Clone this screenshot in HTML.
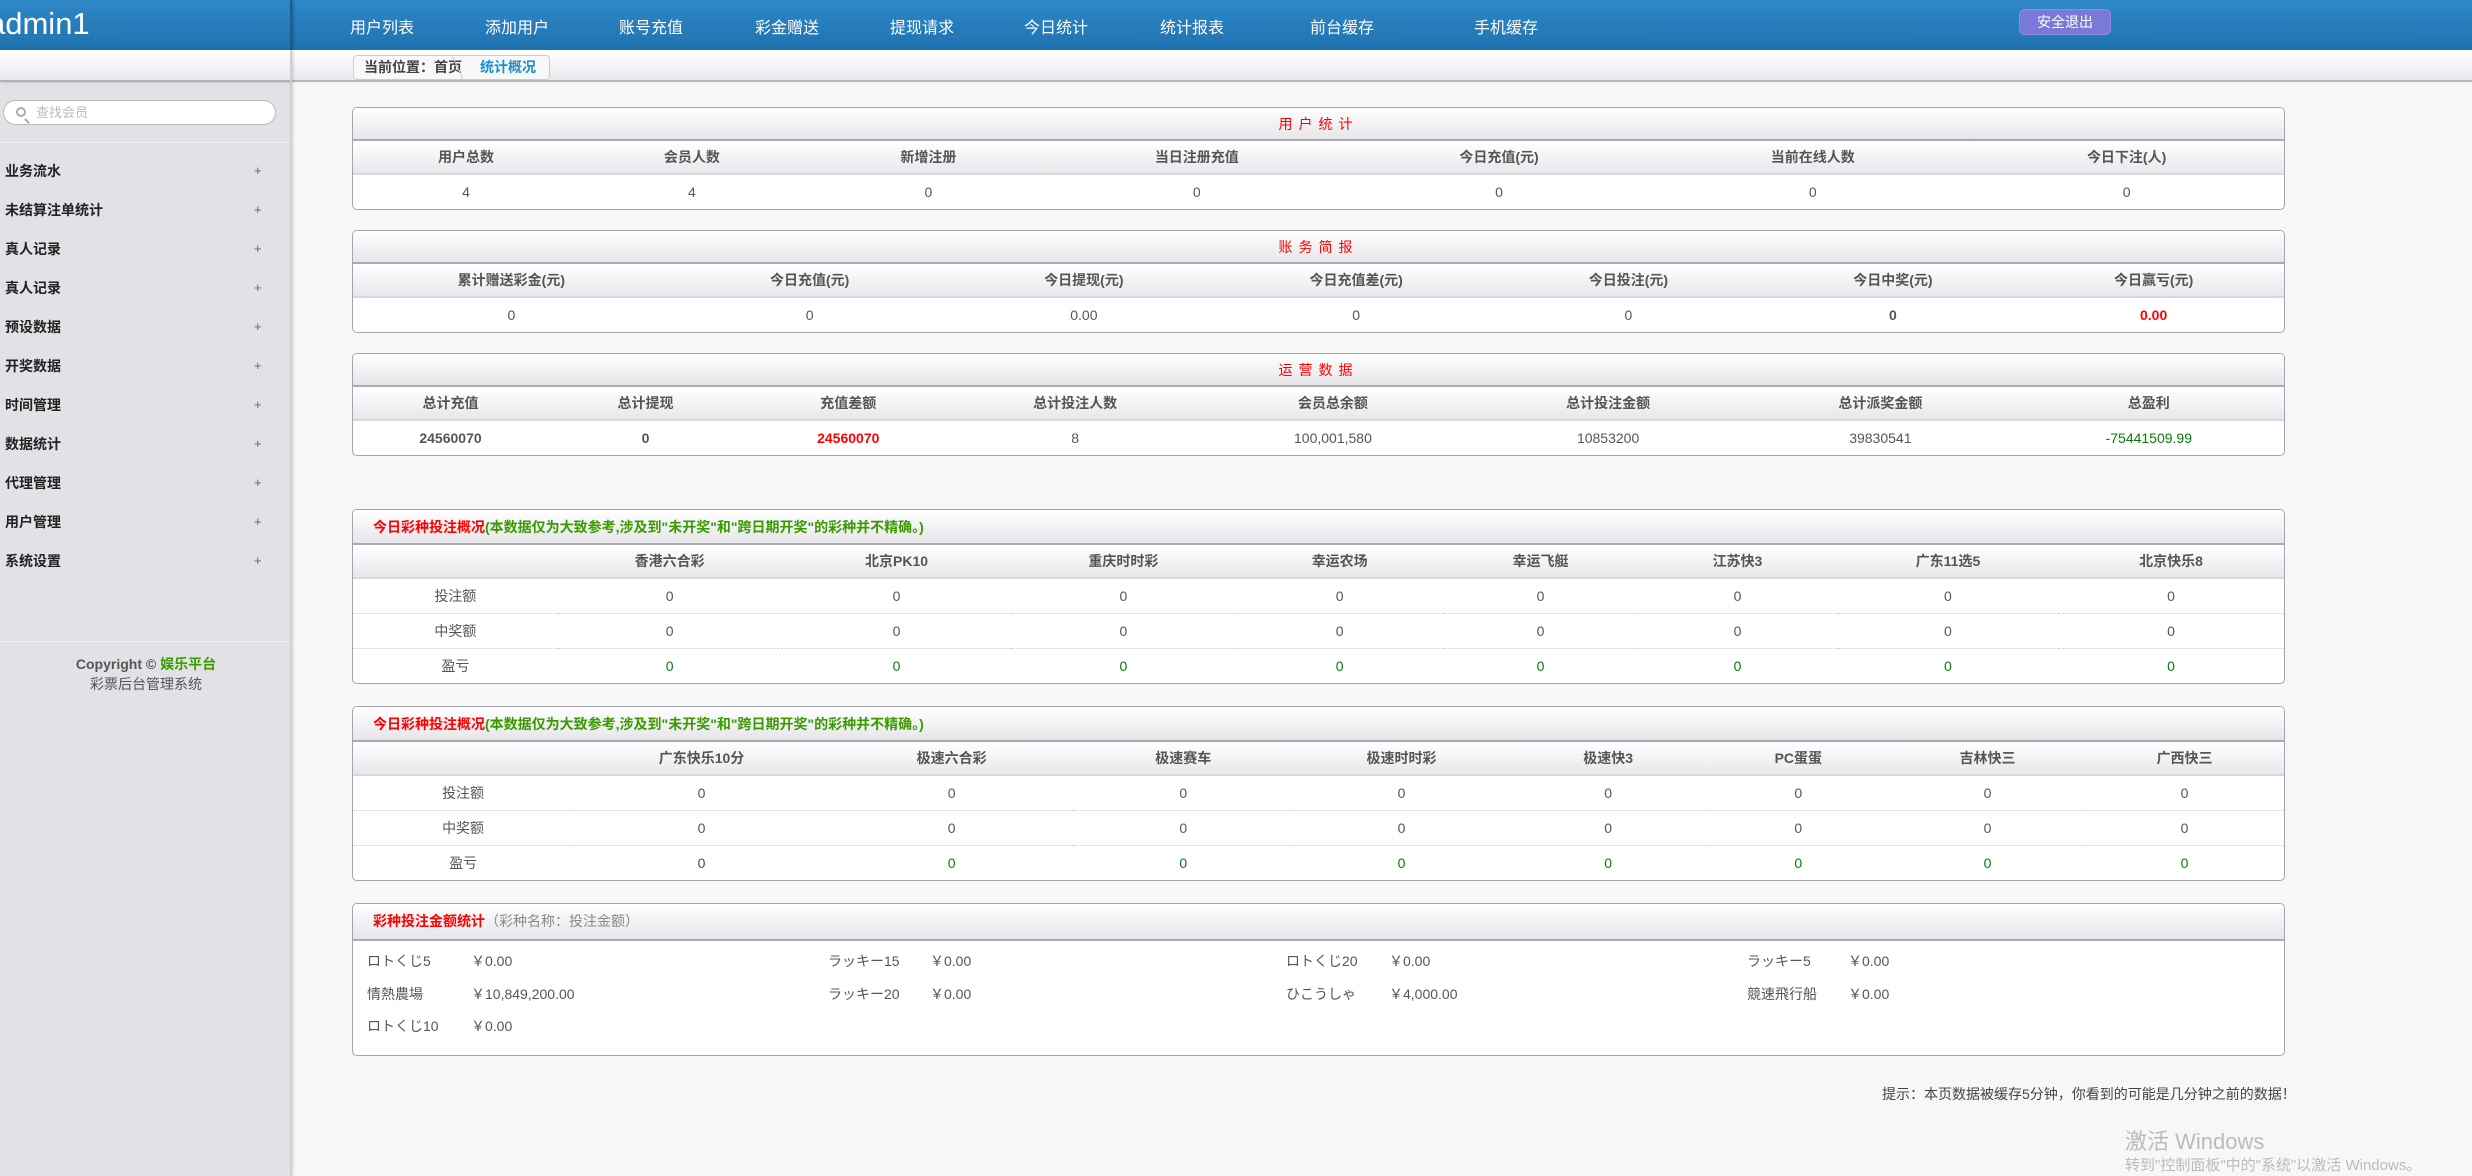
<!DOCTYPE html>
<html><head><meta charset="utf-8">
<style>
*{margin:0;padding:0;box-sizing:border-box}
body{width:2472px;height:1176px;overflow:hidden;background:#f7f7f7;font-family:"Liberation Sans","Noto Sans CJK SC",sans-serif;font-size:14px;color:#555;position:relative}
.hdr{position:absolute;left:0;top:0;width:2472px;height:50px;background:linear-gradient(#2f88c6,#1f72b0)}
.hdrl{position:absolute;left:0;top:0;width:292px;height:50px;border-right:2px solid #1b5f92;box-shadow:1px 0 3px rgba(0,0,0,.3)}
.logo{position:absolute;left:-12px;top:6px;color:#fff;font-size:31px}
.nav{position:absolute;top:14px;color:#fff;font-size:16px;transform:translateX(-50%);white-space:nowrap}
.exit{position:absolute;left:2019px;top:9px;width:92px;height:26px;border-radius:6px;background:#7a78d8;border:1px solid #8f8ce6;color:#fff;font-size:14px;text-align:center;line-height:24px}
.bar{position:absolute;left:0;top:50px;width:2472px;height:32px;background:linear-gradient(#fff,#e9e9ee);border-bottom:2px solid #b8b8c4}
.side{position:absolute;left:0;top:82px;width:292px;height:1094px;background:#e2e2e6;border-right:2px solid #cfcfd4;box-shadow:1px 0 3px rgba(0,0,0,.15)}
.sideh{position:absolute;left:0;top:50px;width:292px;height:32px;border-right:2px solid #cfcfd4;box-shadow:1px 0 3px rgba(0,0,0,.2)}
.crumb{position:absolute;left:353px;top:55px;width:197px;height:25px;border:1px solid #ccc;border-radius:4px;background:#f8f8f8;font-size:14px;line-height:23px;padding-left:10px;color:#444;font-weight:bold}
.crumb span{color:#1a8ed0;margin-left:18px}
.crumb i{position:absolute;left:103px;top:0;width:1px;height:23px;border-right:1px solid #ccc;transform:skewX(25deg)}
.search{position:absolute;left:3px;top:100px;width:273px;height:25px;border:1px solid #bbb;border-radius:13px;background:#fff;color:#bbb;font-size:13px;line-height:23px;padding-left:32px}
.search b{position:absolute;left:12px;top:6px;width:10px;height:10px;border:2px solid #aaa;border-radius:50%}
.search b:after{content:"";position:absolute;left:8px;top:9px;width:2px;height:6px;background:#aaa;transform:rotate(-45deg)}
.sep{position:absolute;left:0;width:290px;height:1px;background:#c8c8cc;border-bottom:1px solid #f0f0f2}
.si{position:absolute;left:5px;font-size:14px;color:#222;font-weight:bold}
.plus{position:absolute;left:254px;font-size:13px;color:#666}
.copy{position:absolute;left:0;width:292px;text-align:center;font-size:14px;color:#555;font-weight:bold}
.panel{position:absolute;left:352px;width:1933px;border:1px solid #a3a3b3;border-radius:5px;background:#fff;overflow:hidden}
.panel table{width:100%;border-collapse:collapse;table-layout:fixed}
.panel td{text-align:center;font-size:14px}
.tt{height:33px;background:linear-gradient(#fff,#e6e6ea);border-bottom:2px solid #a8a8b6;color:#f00;text-align:center;line-height:32px;font-size:14px;letter-spacing:6px}
.th td{height:33px;background:linear-gradient(#fff,#e8e8ec);border-bottom:2px solid #d6d8e0;font-weight:bold;color:#555}
.tr td{height:35px;border-bottom:1px dotted #ccc}
.tr:last-child td{border-bottom:none}
.tl{height:35px;background:linear-gradient(#fff,#e6e6ea);border-bottom:2px solid #a8a8b6;line-height:34px;padding-left:20px;font-size:14px;font-weight:bold;color:#f00}
.tl span{color:#3a9a00}
.g{color:#0a7a0a}.r{color:#f00;font-weight:bold}.b{font-weight:bold}
.it{position:absolute;font-size:14px;color:#555}
</style></head><body>
<div class="hdr"></div>
<div class="hdrl"></div>
<div class="logo">admin1</div>
<div class="nav" style="left:382px">用户列表</div>
<div class="nav" style="left:517px">添加用户</div>
<div class="nav" style="left:651px">账号充值</div>
<div class="nav" style="left:787px">彩金赠送</div>
<div class="nav" style="left:922px">提现请求</div>
<div class="nav" style="left:1056px">今日统计</div>
<div class="nav" style="left:1192px">统计报表</div>
<div class="nav" style="left:1342px">前台缓存</div>
<div class="nav" style="left:1506px">手机缓存</div>
<div class="exit">安全退出</div>
<div class="bar"></div>
<div class="side"></div>
<div class="sideh"></div>
<div class="crumb">当前位置：首页<i></i><span>统计概况</span></div>
<div class="search"><b></b>查找会员</div>
<div class="sep" style="top:142px"></div>
<div class="si" style="top:161px">业务流水</div><div class="plus" style="top:163px">+</div>
<div class="si" style="top:200px">未结算注单统计</div><div class="plus" style="top:202px">+</div>
<div class="si" style="top:239px">真人记录</div><div class="plus" style="top:241px">+</div>
<div class="si" style="top:278px">真人记录</div><div class="plus" style="top:280px">+</div>
<div class="si" style="top:317px">预设数据</div><div class="plus" style="top:319px">+</div>
<div class="si" style="top:356px">开奖数据</div><div class="plus" style="top:358px">+</div>
<div class="si" style="top:395px">时间管理</div><div class="plus" style="top:397px">+</div>
<div class="si" style="top:434px">数据统计</div><div class="plus" style="top:436px">+</div>
<div class="si" style="top:473px">代理管理</div><div class="plus" style="top:475px">+</div>
<div class="si" style="top:512px">用户管理</div><div class="plus" style="top:514px">+</div>
<div class="si" style="top:551px">系统设置</div><div class="plus" style="top:553px">+</div>
<div class="sep" style="top:641px"></div>
<div class="copy" style="top:654px">Copyright © <span style="color:#3a9a00">娱乐平台</span></div>
<div class="copy" style="top:674px;font-weight:normal">彩票后台管理系统</div>

<div class="panel" style="top:107px">
<div class="tt">用户统计</div>
<table><colgroup><col style="width:11.7%"><col style="width:11.7%"><col style="width:12.8%"><col style="width:15%"><col style="width:16.3%"><col style="width:16.2%"><col style="width:16.3%"></colgroup>
<tr class="th"><td>用户总数</td><td>会员人数</td><td>新增注册</td><td>当日注册充值</td><td>今日充值(元)</td><td>当前在线人数</td><td>今日下注(人)</td></tr>
<tr class="tr"><td>4</td><td>4</td><td>0</td><td>0</td><td>0</td><td>0</td><td>0</td></tr></table></div>

<div class="panel" style="top:230px">
<div class="tt">账务简报</div>
<table><colgroup><col style="width:16.4%"><col style="width:14.5%"><col style="width:13.9%"><col style="width:14.3%"><col style="width:13.9%"><col style="width:13.5%"><col style="width:13.5%"></colgroup>
<tr class="th"><td>累计赠送彩金(元)</td><td>今日充值(元)</td><td>今日提现(元)</td><td>今日充值差(元)</td><td>今日投注(元)</td><td>今日中奖(元)</td><td>今日赢亏(元)</td></tr>
<tr class="tr"><td>0</td><td>0</td><td>0.00</td><td>0</td><td>0</td><td class="b">0</td><td class="r">0.00</td></tr></table></div>

<div class="panel" style="top:353px">
<div class="tt">运营数据</div>
<table><colgroup><col style="width:10.1%"><col style="width:10.1%"><col style="width:10.9%"><col style="width:12.6%"><col style="width:14.1%"><col style="width:14.4%"><col style="width:13.8%"><col style="width:14%"></colgroup>
<tr class="th"><td>总计充值</td><td>总计提现</td><td>充值差额</td><td>总计投注人数</td><td>会员总余额</td><td>总计投注金额</td><td>总计派奖金额</td><td>总盈利</td></tr>
<tr class="tr"><td class="b">24560070</td><td class="b">0</td><td class="r">24560070</td><td>8</td><td>100,001,580</td><td>10853200</td><td>39830541</td><td class="g">-75441509.99</td></tr></table></div>

<div class="panel" style="top:509px">
<div class="tl">今日彩种投注概况<span>(本数据仅为大致参考,涉及到"未开奖"和"跨日期开奖"的彩种并不精确。)</span></div>
<table><colgroup><col style="width:10.6%"><col style="width:11.6%"><col style="width:11.9%"><col style="width:11.6%"><col style="width:10.8%"><col style="width:10%"><col style="width:10.4%"><col style="width:11.4%"><col style="width:11.7%"></colgroup>
<tr class="th"><td></td><td>香港六合彩</td><td>北京PK10</td><td>重庆时时彩</td><td>幸运农场</td><td>幸运飞艇</td><td>江苏快3</td><td>广东11选5</td><td>北京快乐8</td></tr>
<tr class="tr"><td>投注额</td><td>0</td><td>0</td><td>0</td><td>0</td><td>0</td><td>0</td><td>0</td><td>0</td></tr>
<tr class="tr"><td>中奖额</td><td>0</td><td>0</td><td>0</td><td>0</td><td>0</td><td>0</td><td>0</td><td>0</td></tr>
<tr class="tr"><td>盈亏</td><td class="g">0</td><td class="g">0</td><td class="g">0</td><td class="g">0</td><td class="g">0</td><td class="g">0</td><td class="g">0</td><td class="g">0</td></tr></table></div>

<div class="panel" style="top:706px">
<div class="tl">今日彩种投注概况<span>(本数据仅为大致参考,涉及到"未开奖"和"跨日期开奖"的彩种并不精确。)</span></div>
<table><colgroup><col style="width:11.4%"><col style="width:13.3%"><col style="width:12.6%"><col style="width:11.4%"><col style="width:11.2%"><col style="width:10.2%"><col style="width:9.5%"><col style="width:10.1%"><col style="width:10.3%"></colgroup>
<tr class="th"><td></td><td>广东快乐10分</td><td>极速六合彩</td><td>极速赛车</td><td>极速时时彩</td><td>极速快3</td><td>PC蛋蛋</td><td>吉林快三</td><td>广西快三</td></tr>
<tr class="tr"><td>投注额</td><td>0</td><td>0</td><td>0</td><td>0</td><td>0</td><td>0</td><td>0</td><td>0</td></tr>
<tr class="tr"><td>中奖额</td><td>0</td><td>0</td><td>0</td><td>0</td><td>0</td><td>0</td><td>0</td><td>0</td></tr>
<tr class="tr"><td>盈亏</td><td class="g">0</td><td class="g">0</td><td class="g">0</td><td class="g">0</td><td class="g">0</td><td class="g">0</td><td class="g">0</td><td class="g">0</td></tr></table></div>

<div class="panel" style="top:903px;height:153px">
<div class="tl" style="height:37px;font-size:14px">彩种投注金额统计<span style="color:#888;font-weight:normal">（彩种名称：投注金额）</span></div>
</div>
<div class="it" style="left:367px;top:951px">ロトくじ5</div><div class="it" style="left:471px;top:951px">￥0.00</div>
<div class="it" style="left:828px;top:951px">ラッキー15</div><div class="it" style="left:930px;top:951px">￥0.00</div>
<div class="it" style="left:1286px;top:951px">ロトくじ20</div><div class="it" style="left:1389px;top:951px">￥0.00</div>
<div class="it" style="left:1747px;top:951px">ラッキー5</div><div class="it" style="left:1848px;top:951px">￥0.00</div>
<div class="it" style="left:367px;top:984px">情熱農場</div><div class="it" style="left:471px;top:984px">￥10,849,200.00</div>
<div class="it" style="left:828px;top:984px">ラッキー20</div><div class="it" style="left:930px;top:984px">￥0.00</div>
<div class="it" style="left:1286px;top:984px">ひこうしゃ</div><div class="it" style="left:1389px;top:984px">￥4,000.00</div>
<div class="it" style="left:1747px;top:984px">競速飛行船</div><div class="it" style="left:1848px;top:984px">￥0.00</div>
<div class="it" style="left:367px;top:1016px">ロトくじ10</div><div class="it" style="left:471px;top:1016px">￥0.00</div>

<div class="it" style="left:1882px;top:1084px;color:#444">提示：本页数据被缓存5分钟，你看到的可能是几分钟之前的数据！</div>
<div class="it" style="left:2125px;top:1124px;font-size:22px;color:#bbb">激活 Windows</div>
<div class="it" style="left:2125px;top:1154px;font-size:15px;color:#bbb">转到"控制面板"中的"系统"以激活 Windows。</div>
</body></html>
